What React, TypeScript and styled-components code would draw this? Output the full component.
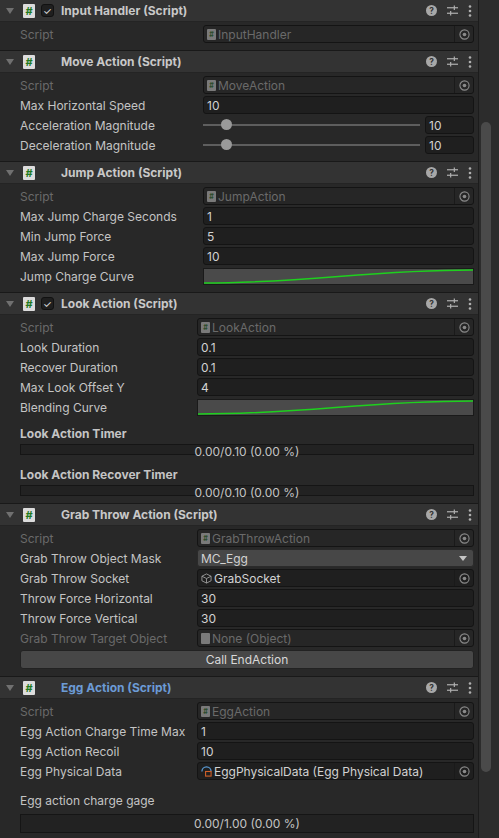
import React from "react";
import styled, { createGlobalStyle } from "styled-components";

const Global = createGlobalStyle`
  html, body { margin: 0; padding: 0; background: #282828; }
  body { font-family: Inter, "Noto Sans", sans-serif; font-size: 12px; color: #c4c4c4; }
`;

const Page = styled.div`
  display: flex;
  width: 499px;
  height: 838px;
  overflow: hidden;
`;

const Content = styled.div`
  width: 478px;
  flex-shrink: 0;
  display: flex;
  flex-direction: column;
`;

const ScrollTrack = styled.div`
  width: 21px;
  border-left: 1px solid #1c1c1c;
  background: #2c2c2c;
  display: flex;
  flex-direction: column;
  padding: 122px 0 0 2px;
  box-sizing: border-box;
`;

const ScrollThumb = styled.div`
  width: 10px;
  height: 650px;
  border-radius: 5px;
  background: #4a4a4a;
`;

const Section = styled.div<{ $last?: boolean }>`
  border-bottom: ${({ $last }) => ($last ? "none" : "1px solid #191919")};
  padding-bottom: 7px;
`;

const Header = styled.div`
  height: 21px;
  display: flex;
  align-items: center;
  background: #333333;
  border-bottom: 1px solid #242424;
  padding-left: 6px;
  padding-right: 6px;
`;

const Arrow = styled.span`
  width: 0;
  height: 0;
  border-left: 4px solid transparent;
  border-right: 4px solid transparent;
  border-top: 6px solid #707070;
  margin-right: 9px;
`;

const ScriptIcon = styled.span<{ $small?: boolean }>`
  width: ${({ $small }) => ($small ? 9 : 12)}px;
  height: ${({ $small }) => ($small ? 11 : 14)}px;
  background: ${({ $small }) => ($small ? "#7a7a7a" : "#dcdcdc")};
  border-radius: 1px;
  color: ${({ $small }) => ($small ? "#2b4a2b" : "#1f7a1f")};
  font-size: ${({ $small }) => ($small ? 7 : 11)}px;
  font-weight: 700;
  display: flex;
  align-items: center;
  justify-content: center;
  flex-shrink: 0;
`;

const Check = styled.span<{ $show: boolean }>`
  width: 13px;
  height: 13px;
  margin-left: 6px;
  border-radius: 3px;
  background: #1f1f1f;
  border: 1px solid #111;
  box-sizing: border-box;
  color: #e0e0e0;
  font-size: 10px;
  display: flex;
  align-items: center;
  justify-content: center;
  visibility: ${({ $show }) => ($show ? "visible" : "hidden")};
`;

const Title = styled.span<{ $blue?: boolean }>`
  margin-left: 7px;
  font-weight: 700;
  color: ${({ $blue }) => ($blue ? "#6c9bd6" : "#c8c8c8")};
  flex: 1;
`;

const Tools = styled.div`
  display: flex;
  gap: 10px;
  align-items: center;
`;

const Body = styled.div`
  padding: 3px 4px 0 20px;
  display: flex;
  flex-direction: column;
  gap: 2px;
`;

const Row = styled.div<{ $lw: number }>`
  display: grid;
  grid-template-columns: ${({ $lw }) => $lw}px 1fr;
  align-items: center;
  height: 18px;
`;

const Label = styled.span<{ $dim?: boolean }>`
  color: ${({ $dim }) => ($dim ? "#6a6a6a" : "#c4c4c4")};
  white-space: nowrap;
`;

const Field = styled.div<{ $dim?: boolean; $light?: boolean }>`
  height: 18px;
  box-sizing: border-box;
  border: 1px solid ${({ $light }) => ($light ? "#2a2a2a" : "#141414")};
  border-radius: 3px;
  background: ${({ $dim, $light }) => ($light ? "#474747" : $dim ? "#262626" : "#1f1f1f")};
  color: ${({ $dim }) => ($dim ? "#6a6a6a" : "#d2d2d2")};
  display: flex;
  align-items: center;
  padding-left: 3px;
  gap: 2px;
  overflow: hidden;
  white-space: nowrap;
`;

const Grow = styled.span`
  flex: 1;
  overflow: hidden;
`;

const PickBtn = styled.span`
  width: 18px;
  align-self: stretch;
  border-left: 1px solid #1a1a1a;
  display: flex;
  align-items: center;
  justify-content: center;
`;

const SliderWrap = styled.div`
  display: flex;
  align-items: center;
  gap: 5px;
`;

const Track = styled.div`
  flex: 1;
  height: 2px;
  background: #5e5e5e;
  position: relative;
`;

const Thumb = styled.span`
  position: absolute;
  left: 18px;
  top: -5px;
  width: 11px;
  height: 11px;
  border-radius: 50%;
  background: #999;
`;

const NumBox = styled(Field)`
  width: 49px;
`;

const Curve = styled.div`
  height: 17px;
  background: #4a4a4a;
  border: 1px solid #1a1a1a;
  box-sizing: border-box;
`;

const BoldLabel = styled.div<{ $top: number; $plain?: boolean }>`
  font-weight: ${({ $plain }) => ($plain ? 400 : 700)};
  color: #c4c4c4;
  margin-top: ${({ $top }) => $top}px;
  height: 14px;
  line-height: 14px;
`;

const Bar = styled.div<{ $h: number }>`
  height: ${({ $h }) => $h}px;
  background: #222;
  border: 1px solid #151515;
  display: flex;
  justify-content: center;
  align-items: ${({ $h }) => ($h > 12 ? "center" : "flex-start")};
  color: #c4c4c4;
  line-height: ${({ $h }) => ($h > 12 ? "normal" : "14px")};
  overflow: visible;
  margin-top: ${({ $h }) => ($h > 12 ? 4 : 1)}px;
`;

const Button = styled.div`
  height: 17px;
  margin-top: 1px;
  border-radius: 3px;
  background: #474747;
  border: 1px solid #222;
  display: flex;
  justify-content: center;
  align-items: center;
  color: #d8d8d8;
`;

const Target = () => (
  <svg width="11" height="11" viewBox="0 0 12 12">
    <circle cx="6" cy="6" r="5" fill="none" stroke="#8a8a8a" strokeWidth="1.2" />
    <circle cx="6" cy="6" r="2" fill="#8a8a8a" />
  </svg>
);

const HeaderTools = () => (
  <Tools>
    <svg width="11" height="11" viewBox="0 0 12 12">
      <circle cx="6" cy="6" r="6" fill="#a8a8a8" />
      <text x="6" y="9.3" fontSize="9" fontWeight="700" textAnchor="middle" fill="#333" fontFamily="Inter">?</text>
    </svg>
    <svg width="11" height="11" viewBox="0 0 12 12" stroke="#b0b0b0" strokeWidth="1.3">
      <line x1="0" y1="3" x2="12" y2="3" />
      <line x1="0" y1="9" x2="12" y2="9" />
      <line x1="8" y1="0.5" x2="8" y2="5.5" />
      <line x1="4" y1="6.5" x2="4" y2="11.5" />
    </svg>
    <svg width="4" height="12" viewBox="0 0 4 12" fill="#b0b0b0">
      <circle cx="2" cy="1.5" r="1.3" />
      <circle cx="2" cy="6" r="1.3" />
      <circle cx="2" cy="10.5" r="1.3" />
    </svg>
  </Tools>
);

const Head = ({ title, check, blue }: { title: string; check?: boolean; blue?: boolean }) => (
  <Header>
    <Arrow />
    <ScriptIcon>#</ScriptIcon>
    <Check $show={!!check}>✓</Check>
    <Title $blue={blue}>{title}</Title>
    <HeaderTools />
  </Header>
);

const ScriptRow = ({ lw, name }: { lw: number; name: string }) => (
  <Row $lw={lw}>
    <Label $dim>Script</Label>
    <Field $dim>
      <ScriptIcon $small>#</ScriptIcon>
      <Grow>{name}</Grow>
      <PickBtn><Target /></PickBtn>
    </Field>
  </Row>
);

const ValueRow = ({ lw, label, value }: { lw: number; label: string; value: string }) => (
  <Row $lw={lw}>
    <Label>{label}</Label>
    <Field>{value}</Field>
  </Row>
);

const SliderRow = ({ lw, label, value }: { lw: number; label: string; value: string }) => (
  <Row $lw={lw}>
    <Label>{label}</Label>
    <SliderWrap>
      <Track><Thumb /></Track>
      <NumBox>{value}</NumBox>
    </SliderWrap>
  </Row>
);

const CurveRow = ({ lw, label }: { lw: number; label: string }) => (
  <Row $lw={lw}>
    <Label>{label}</Label>
    <Curve>
      <svg width="100%" height="15" viewBox="0 0 100 15" preserveAspectRatio="none">
        <path d="M0 14 C40 14 60 1 100 1" fill="none" stroke="#1ed01e" strokeWidth="1.5" vectorEffect="non-scaling-stroke" />
      </svg>
    </Curve>
  </Row>
);

const Cube = () => (
  <svg width="11" height="11" viewBox="0 0 12 12" fill="none" stroke="#9a9a9a" strokeWidth="1">
    <path d="M6 1 L11 3.5 L11 8.5 L6 11 L1 8.5 L1 3.5 Z M1 3.5 L6 6 L11 3.5 M6 6 L6 11" />
  </svg>
);

const App = () => (
  <Page>
    <Global />
    <Content>
      <Section>
        <Head title="Input Handler (Script)" check />
        <Body>
          <ScriptRow lw={183} name="InputHandler" />
        </Body>
      </Section>
      <Section>
        <Head title="Move Action (Script)" />
        <Body>
          <ScriptRow lw={183} name="MoveAction" />
          <ValueRow lw={183} label="Max Horizontal Speed" value="10" />
          <SliderRow lw={183} label="Acceleration Magnitude" value="10" />
          <SliderRow lw={183} label="Deceleration Magnitude" value="10" />
        </Body>
      </Section>
      <Section>
        <Head title="Jump Action (Script)" />
        <Body>
          <ScriptRow lw={183} name="JumpAction" />
          <ValueRow lw={183} label="Max Jump Charge Seconds" value="1" />
          <ValueRow lw={183} label="Min Jump Force" value="5" />
          <ValueRow lw={183} label="Max Jump Force" value="10" />
          <CurveRow lw={183} label="Jump Charge Curve" />
        </Body>
      </Section>
      <Section>
        <Head title="Look Action (Script)" check />
        <Body>
          <ScriptRow lw={177} name="LookAction" />
          <ValueRow lw={177} label="Look Duration" value="0.1" />
          <ValueRow lw={177} label="Recover Duration" value="0.1" />
          <ValueRow lw={177} label="Max Look Offset Y" value="4" />
          <CurveRow lw={177} label="Blending Curve" />
          <BoldLabel $top={9}>Look Action Timer</BoldLabel>
          <Bar $h={9}>0.00/0.10 (0.00 %)</Bar>
          <BoldLabel $top={11}>Look Action Recover Timer</BoldLabel>
          <Bar $h={9}>0.00/0.10 (0.00 %)</Bar>
        </Body>
      </Section>
      <Section>
        <Head title="Grab Throw Action (Script)" />
        <Body>
          <ScriptRow lw={177} name="GrabThrowAction" />
          <Row $lw={177}>
            <Label>Grab Throw Object Mask</Label>
            <Field $light>
              <Grow>MC_Egg</Grow>
              <svg width="18" height="8" viewBox="0 0 18 8"><path d="M4 2 L12 2 L8 7 Z" fill="#c4c4c4" /></svg>
            </Field>
          </Row>
          <Row $lw={177}>
            <Label>Grab Throw Socket</Label>
            <Field>
              <Cube />
              <Grow>GrabSocket</Grow>
              <PickBtn><Target /></PickBtn>
            </Field>
          </Row>
          <ValueRow lw={177} label="Throw Force Horizontal" value="30" />
          <ValueRow lw={177} label="Throw Force Vertical" value="30" />
          <Row $lw={177}>
            <Label $dim>Grab Throw Target Object</Label>
            <Field $dim>
              <ScriptIcon $small> </ScriptIcon>
              <Grow>None (Object)</Grow>
              <PickBtn><Target /></PickBtn>
            </Field>
          </Row>
          <Button>Call EndAction</Button>
        </Body>
      </Section>
      <Section $last>
        <Head title="Egg Action (Script)" blue />
        <Body>
          <ScriptRow lw={177} name="EggAction" />
          <ValueRow lw={177} label="Egg Action Charge Time Max" value="1" />
          <ValueRow lw={177} label="Egg Action Recoil" value="10" />
          <Row $lw={177}>
            <Label>Egg Physical Data</Label>
            <Field>
              <svg width="11" height="11" viewBox="0 0 12 12">
                <path d="M1 6 A5 5 0 0 1 11 6" fill="none" stroke="#5a9bd6" strokeWidth="1.4" />
                <rect x="5" y="6" width="6" height="5" fill="none" stroke="#d0602a" strokeWidth="1.2" />
              </svg>
              <Grow>EggPhysicalData (Egg Physical Data)</Grow>
              <PickBtn><Target /></PickBtn>
            </Field>
          </Row>
          <BoldLabel $top={12} $plain>Egg action charge gage</BoldLabel>
          <Bar $h={17}>0.00/1.00 (0.00 %)</Bar>
        </Body>
      </Section>
    </Content>
    <ScrollTrack>
      <ScrollThumb />
    </ScrollTrack>
  </Page>
);

export default App;
